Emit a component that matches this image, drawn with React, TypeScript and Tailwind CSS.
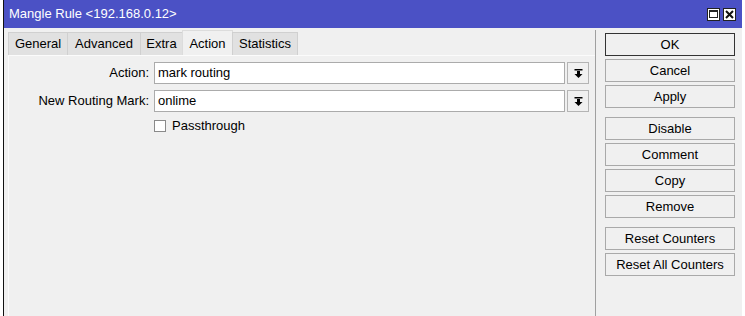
import React from "react";

const DropIcon = () => (
  <svg width="9" height="9" viewBox="0 0 9 9">
    <rect x="0.5" y="0" width="8" height="1.5" fill="#000" />
    <rect x="3" y="2" width="3" height="3" fill="#000" />
    <path d="M0.5 5 L8.5 5 L4.5 9 Z" fill="#000" />
  </svg>
);

function Btn({ label, def }: { label: string; def?: boolean }) {
  return (
    <div
      className={
        "h-[23px] flex items-center justify-center bg-[#f0f0f0] border " +
        (def ? "border-[#333]" : "border-[#a9a9a9]")
      }
    >
      {label}
    </div>
  );
}

function Field({ label, value }: { label: string; value: string }) {
  return (
    <div className="flex items-center h-[22px]">
      <div className="w-[140px] text-right">{label}</div>
      <div className="w-[411px] h-[22px] bg-white border border-[#ababab] flex items-center pl-[3px] ml-[5px]">
        {value}
      </div>
      <div className="ml-[2px] w-[22px] h-[22px] border border-[#b4b4b4] bg-[#f0f0f0] flex items-center justify-center">
        <DropIcon />
      </div>
    </div>
  );
}

const tabs: { t: string; w: string }[] = [
  { t: "General", w: "w-[60px]" },
  { t: "Advanced", w: "w-[74px]" },
  { t: "Extra", w: "w-[43px]" },
  { t: "Action", w: "w-[51px]" },
  { t: "Statistics", w: "w-[66px]" },
];

export default function App() {
  return (
    <div
      className="w-[745px] h-[316px] bg-white flex text-[13px] text-black overflow-hidden"
      style={{ fontFamily: '"Liberation Sans", Arial, sans-serif' }}
    >
      <div className="ml-[3px] w-[739px] h-full flex flex-col border-l border-[#111]">
        <div className="h-[28px] bg-[#4b51c5] flex items-center justify-between pl-[5px] pr-[6px] shrink-0">
          <span className="text-white text-[13px]">Mangle Rule &lt;192.168.0.12&gt;</span>
          <div className="flex gap-[3px]">
            <div className="w-[13px] h-[13px] bg-white border border-[#222] flex items-center justify-center">
              <div className="w-[9px] h-[8px] border border-[#222] border-t-2" />
            </div>
            <div className="w-[13px] h-[13px] bg-white border border-[#222] flex items-center justify-center">
              <svg width="9" height="9" viewBox="0 0 9 9">
                <path d="M1 1 L8 8 M8 1 L1 8" stroke="#111" strokeWidth="2" />
              </svg>
            </div>
          </div>
        </div>
        <div className="flex-1 flex bg-[#f0f0f0]">
          <div className="w-[591px] flex flex-col pl-[4px] pt-[2px]">
            <div className="flex items-end h-[25px]">
              {tabs.map(({ t, w }) =>
                t === "Action" ? (
                  <div
                    key={t}
                    className={w + " h-[25px] flex items-start justify-center pt-[3px] bg-[#f0f0f0] border-t border-l border-r border-[#dcdcdc] -mr-px"}
                  >
                    {t}
                  </div>
                ) : (
                  <div
                    key={t}
                    className={w + " h-[23px] flex items-center justify-center bg-[#e1e1e1] border border-[#d0d0d0] border-b-0 -mr-px"}
                  >
                    {t}
                  </div>
                )
              )}
            </div>
            <div className="flex-1 border-t border-l border-[#fbfbfb] flex flex-col pt-[6px] gap-[6px]">
              <Field label="Action:" value="mark routing" />
              <Field label="New Routing Mark:" value="onlime" />
              <div className="flex items-center h-[16px] pl-[145px]">
                <div className="w-[12px] h-[12px] bg-white border border-[#8a8a8a]" />
                <span className="ml-[6px]">Passthrough</span>
              </div>
            </div>
          </div>
          <div className="w-px bg-[#a0a0a0] mt-[2px]" />
          <div className="w-[130px] ml-[9px] pt-[5px] flex flex-col">
            <div className="flex flex-col gap-[3px]">
              <Btn label="OK" def />
              <Btn label="Cancel" />
              <Btn label="Apply" />
            </div>
            <div className="flex flex-col gap-[3px] mt-[9px]">
              <Btn label="Disable" />
              <Btn label="Comment" />
              <Btn label="Copy" />
              <Btn label="Remove" />
            </div>
            <div className="flex flex-col gap-[3px] mt-[9px]">
              <Btn label="Reset Counters" />
              <Btn label="Reset All Counters" />
            </div>
          </div>
        </div>
      </div>
    </div>
  );
}
